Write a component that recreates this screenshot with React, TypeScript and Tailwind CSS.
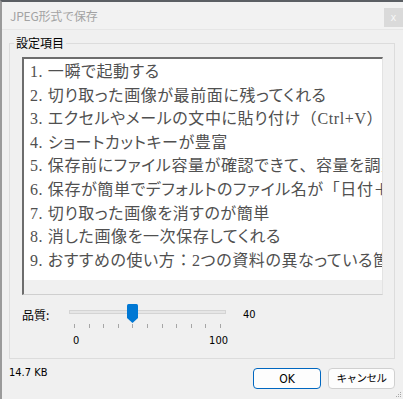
import React from "react";

const items = [
  "一瞬で起動する",
  "切り取った画像が最前面に残ってくれる",
  "エクセルやメールの文中に貼り付け（Ctrl+V）",
  "ショートカットキーが豊富",
  "保存前にファイル容量が確認できて、容量を調整できる",
  "保存が簡単でデフォルトのファイル名が「日付＋時刻」",
  "切り取った画像を消すのが簡単",
  "消した画像を一次保存してくれる",
  "おすすめの使い方：2つの資料の異なっている箇所を比較",
];

const ui = { fontFamily: '"Noto Sans CJK JP", "Noto Sans", sans-serif' };
const narrow = {
  fontFamily: '"Liberation Sans Narrow", "DejaVu Sans Condensed", "Liberation Sans", sans-serif',
};
const serif = { fontFamily: '"Liberation Serif", "Noto Sans CJK JP", serif' };

function Line({ text }: { text: string }) {
  const parts = text.split(/([（）、：「」＋])/);
  return (
    <>
      {parts.map((p, i) =>
        /^[（）、：「」＋]$/.test(p) ? (
          <span key={i} className="[font-feature-settings:normal]">
            {p}
          </span>
        ) : (
          <span key={i}>{p}</span>
        )
      )}
    </>
  );
}

export default function App() {
  const ticks = Array.from({ length: 11 });
  return (
    <div
      className="relative w-[403px] h-[399px] bg-[#f0f0f0] border-t-2 border-t-[#5b5f64] border-l-2 border-l-[#9a9a9a] overflow-hidden flex flex-col text-black"
      style={ui}
    >
      {/* title bar */}
      <div className="h-[28px] flex items-start justify-between bg-[#f2f2f2] border-b border-[#e6e6e6]">
        <div className="pl-[8px] pt-[6px] text-[12px] leading-[16px] text-[#a3a3a3] tracking-[-0.2px]">
          JPEG形式で保存
        </div>
        <div className="mt-[6px] w-[19px] h-[19px] bg-[#dadada] flex items-center justify-center text-[11px] leading-none text-[#f7f7f7]" style={narrow}>
          x
        </div>
      </div>

      {/* group box */}
      <div className="relative ml-[7px] mt-[13px] w-[386px] border border-[#dcdcdc] pl-[12px] pt-[13px] pb-[10px]">
        <div className="absolute left-[4px] top-[-9px] px-[2px] bg-[#f0f0f0] text-[12px] leading-[16px]">
          設定項目
        </div>

        {/* text box */}
        <div className="w-[361px] h-[238px] flex flex-col border-t-2 border-l-2 border-t-[#6d6d6d] border-l-[#6d6d6d] border-r border-b border-r-[#e3e3e3] border-b-[#cfcfcf]">
          <div
            className="flex-1 bg-white overflow-hidden pl-[6px] pt-[1px] text-[16px] leading-[23.6px] text-[#505050] whitespace-nowrap tracking-[0.6px] [font-feature-settings:'palt']"
            style={serif}
          >
            {items.map((t, i) => (
              <div key={i}>
                {i + 1}. <Line text={t} />
              </div>
            ))}
          </div>
          <div className="h-[14px] bg-[#f0f0f0]" />
        </div>

        {/* slider row */}
        <div className="mt-[9px] h-[20px] flex items-center">
          <div className="w-[47px] text-[12px] leading-[16px] pt-[1px]">品質:</div>
          <div className="relative w-[157px] h-[20px]">
            <div className="absolute left-0 right-0 top-[6px] h-[4px] bg-[#e6e6e6] border border-[#d4d4d4]" />
            <svg className="absolute left-[58px] top-0" width="11" height="19" viewBox="0 0 11 19">
              <path d="M1.5 0 H9.5 Q11 0 11 1.5 V14 L5.5 19 L0 14 V1.5 Q0 0 1.5 0 Z" fill="#0078d4" />
            </svg>
          </div>
          <div className="ml-[17px] text-[11px] leading-[16px] pt-[1px]" style={narrow}>
            40
          </div>
        </div>

        {/* ticks */}
        <div className="ml-[52px] w-[147px] h-[4px] flex justify-between">
          {ticks.map((_, i) => (
            <div key={i} className="w-px h-[4px] bg-[#a6a6a6]" />
          ))}
        </div>

        {/* labels */}
        <div className="ml-[51px] w-[155px] mt-[6px] h-[14px] flex justify-between text-[11px] leading-[14px]" style={narrow}>
          <span>0</span>
          <span>100</span>
        </div>
      </div>

      {/* bottom row */}
      <div className="mt-[9px] flex items-start pl-[7px] pr-[8px]">
        <div className="mt-[-2px] text-[11px] leading-[14px]" style={narrow}>
          14.7 KB
        </div>
        <div className="ml-auto flex gap-[7px]">
          <div className="w-[68px] h-[21px] rounded-[4px] border border-[#0067c0] bg-[#fdfdfd] flex items-center justify-center text-[12px] leading-none" style={narrow}>
            OK
          </div>
          <div className="w-[67px] h-[21px] rounded-[4px] border border-[#d0d0d0] bg-[#fdfdfd] flex items-center justify-center text-[10.5px] leading-none tracking-[-0.5px]">
            キャンセル
          </div>
        </div>
      </div>

      {/* resize grip */}
      <svg className="absolute right-[1px] bottom-[1px]" width="7" height="7" viewBox="0 0 7 7">
        <rect x="5" y="1" width="1" height="1" fill="#a8a8a8" />
        <rect x="3" y="3" width="1" height="1" fill="#a8a8a8" />
        <rect x="5" y="3" width="1" height="1" fill="#a8a8a8" />
        <rect x="1" y="5" width="1" height="1" fill="#a8a8a8" />
        <rect x="3" y="5" width="1" height="1" fill="#a8a8a8" />
        <rect x="5" y="5" width="1" height="1" fill="#a8a8a8" />
      </svg>
    </div>
  );
}
